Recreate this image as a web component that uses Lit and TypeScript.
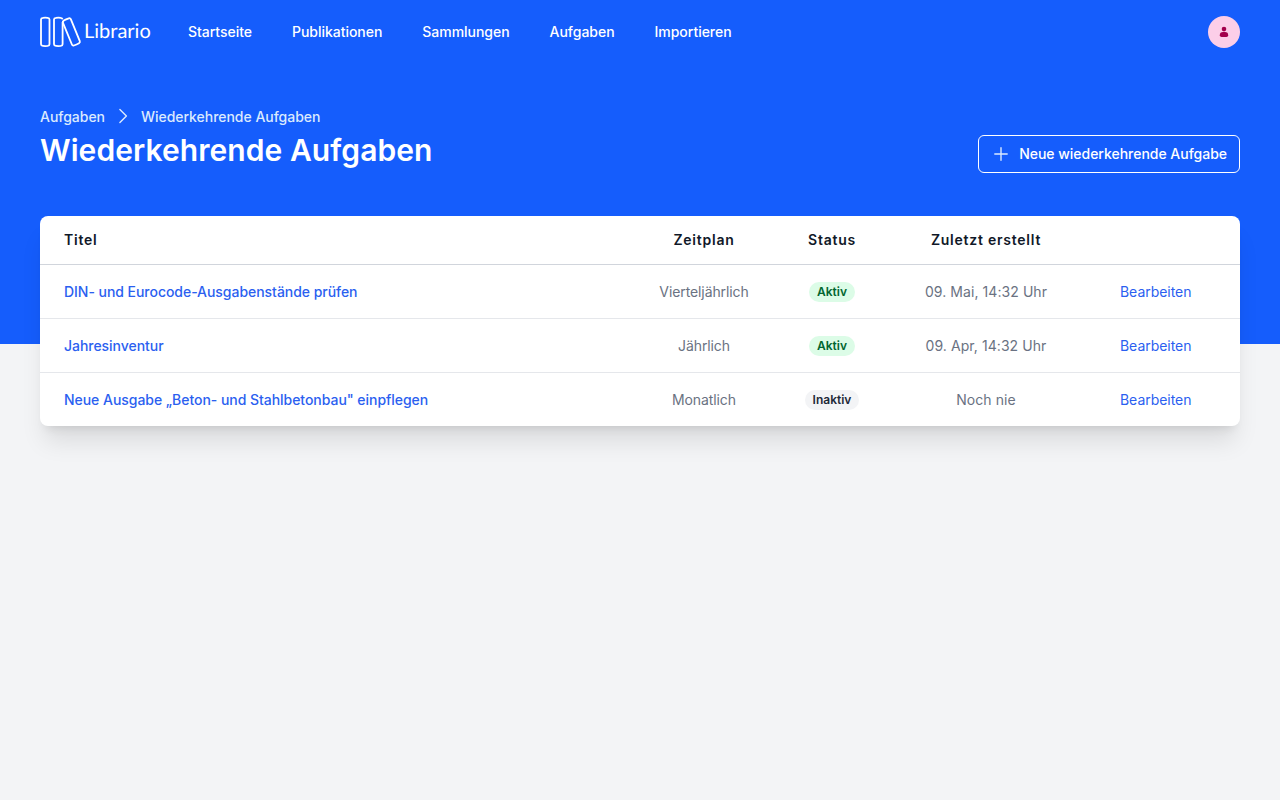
import { LitElement, html, css } from "lit";
import { customElement } from "lit/decorators.js";

interface Task {
  title: string;
  schedule: string;
  active: boolean;
  last: string;
}

const NAV = ["Startseite", "Publikationen", "Sammlungen", "Aufgaben", "Importieren"];

const TASKS: Task[] = [
  { title: "DIN- und Eurocode-Ausgabenstände prüfen", schedule: "Vierteljährlich", active: true, last: "09. Mai, 14:32 Uhr" },
  { title: "Jahresinventur", schedule: "Jährlich", active: true, last: "09. Apr, 14:32 Uhr" },
  { title: "Neue Ausgabe „Beton- und Stahlbetonbau\" einpflegen", schedule: "Monatlich", active: false, last: "Noch nie" },
];

@customElement("app-root")
export class AppRoot extends LitElement {
  static styles = css`
    :host {
      display: block;
      min-height: 100vh;
      background: #f3f4f6;
      font-family: Inter, sans-serif;
      font-size: 14px;
      line-height: 20px;
      color: #101828;
    }
    * { box-sizing: border-box; }
    a { text-decoration: none; color: inherit; }
    .top { height: 344px; background: #155dfc; padding: 0 40px; color: #fff; }
    .bar { height: 64px; display: flex; align-items: center; }
    .brand { display: flex; align-items: center; width: 148px; height: 32px; }
    .brand svg { display: block; flex: none; }
    .word { font-family: Lato, sans-serif; font-size: 20px; line-height: 24px; margin: 0 0 3px 2px; text-rendering: geometricPrecision; }
    nav { display: flex; gap: 40px; font-weight: 500; flex: 1; letter-spacing: -0.03px; }
    .avatar {
      width: 32px; height: 32px; border-radius: 50%;
      background: #fccee8; display: grid; place-items: center;
    }
    .avatar svg { display: block; }
    .head { display: flex; justify-content: space-between; align-items: flex-end; padding-top: 43px; height: 109px; }
    .crumbs { display: flex; align-items: center; font-weight: 500; color: #dbeafe; height: 20px; letter-spacing: -0.03px; }
    .crumbs svg { display: block; margin: 0 8px; }
    h1 { margin: 5px 0 0; font-size: 30px; line-height: 36px; font-weight: 600; height: 41px; letter-spacing: 0.07px; }
    .new {
      font: inherit; font-weight: 500; color: #fff; background: none;
      border: 1px solid #fff; border-radius: 6px; height: 38px; width: 262px;
      padding: 0 12px 0 14px; display: flex; align-items: center; justify-content: space-between;
      letter-spacing: -0.02px;
    }
    .new svg { display: block; }
    .card {
      margin: -128px 40px 0; background: #fff; border-radius: 8px; overflow: hidden;
      box-shadow: 0 20px 25px -5px rgb(0 0 0 / 0.1), 0 8px 10px -6px rgb(0 0 0 / 0.1);
    }
    .row {
      display: grid; grid-template-columns: 1fr 136px 120px 188px 160px;
      align-items: center; height: 54px; border-bottom: 1px solid #e5e7eb;
      text-align: center; color: #6a7282;
    }
    .row:last-child { height: 53px; border-bottom: 0; }
    .row.header {
      height: 49px; border-color: #d1d5dc; color: #101828;
      font-weight: 600; letter-spacing: 0.76px;
    }
    .title { text-align: left; padding-left: 24px; }
    .link { color: #2b5ff0; letter-spacing: -0.04px; }
    .title .link { font-weight: 500; }
    .schedule { letter-spacing: -0.1px; }
    .last { letter-spacing: 0.07px; }
    .edit { text-align: left; padding-left: 40px; }
    .badge {
      display: inline-block; vertical-align: middle; font-size: 12px; line-height: 20px;
      font-weight: 600; padding: 0 8px; border-radius: 10px;
      background: #f3f4f6; color: #1e2939;
    }
    .badge.on { background: #dcfce7; color: #016630; }
  `;

  render() {
    return html`
      <div class="top">
        <div class="bar">
          <div class="brand">
            <svg width="42" height="32" viewBox="0 0 42 32" fill="none" stroke="#fff" stroke-width="1.8" stroke-linejoin="round">
              <path d="M3 1.9Q5.2 1.5 7.6 1.9Q9.5 2.2 9.5 3.6V28.2Q9.5 29.6 7.6 29.9Q5.2 30.2 3 29.9Q1 29.6 1 28.2V3.6Q1 2.2 3 1.9Z" />
              <path d="M22.6 6V28.2Q22.6 29.6 20.7 29.9Q18.3 30.2 16 29.9Q14 29.6 14 28.2V3.6Q14 2.2 16 1.9Q18.3 1.5 20.7 1.9Q22.3 2.1 22.6 3.4" />
              <path d="M23.8 4.6Q26 3.1 28.8 2.3Q30.2 1.9 30.8 3.2L39.8 25.2Q40.3 26.5 39 27.3Q36.7 28.7 33.9 29.5Q32.4 29.8 31.9 28.5L22.9 6.6Q22.4 5.4 23.8 4.6Z" />
            </svg>
            <span class="word">Librario</span>
          </div>
          <nav>${NAV.map((n) => html`<a>${n}</a>`)}</nav>
          <div class="avatar">
            <svg width="10" height="12" viewBox="0 0 10 12" fill="#a3004c">
              <circle cx="5" cy="3.1" r="2.3" />
              <path d="M.8 9.2Q.8 6 4 6H6Q9.2 6 9.2 9.2Q9.2 11 7.4 11H2.6Q.8 11 .8 9.2Z" />
            </svg>
          </div>
        </div>
        <div class="head">
          <div>
            <div class="crumbs">
              <a>Aufgaben</a>
              <svg width="20" height="20" viewBox="0 0 20 20" fill="none" stroke="currentColor" stroke-width="1.4" stroke-linecap="round" stroke-linejoin="round">
                <path d="M6.9 2.5 13.4 9 6.9 15.5" />
              </svg>
              <a>Wiederkehrende Aufgaben</a>
            </div>
            <h1>Wiederkehrende Aufgaben</h1>
          </div>
          <button class="new">
            <svg width="16" height="16" viewBox="0 0 16 16" fill="none" stroke="#dbeafe" stroke-width="1.4" stroke-linecap="round">
              <path d="M8 1.8V14.2M1.8 8H14.2" />
            </svg>
            <span>Neue wiederkehrende Aufgabe</span>
          </button>
        </div>
      </div>
      <div class="card">
        <div class="row header">
          <div class="title">Titel</div><div>Zeitplan</div><div>Status</div><div>Zuletzt erstellt</div><div></div>
        </div>
        ${TASKS.map(
          (t) => html`<div class="row">
            <div class="title"><a class="link">${t.title}</a></div>
            <div class="schedule">${t.schedule}</div>
            <div><span class="badge ${t.active ? "on" : ""}">${t.active ? "Aktiv" : "Inaktiv"}</span></div>
            <div class="last">${t.last}</div>
            <div class="edit"><a class="link">Bearbeiten</a></div>
          </div>`
        )}
      </div>
    `;
  }
}
